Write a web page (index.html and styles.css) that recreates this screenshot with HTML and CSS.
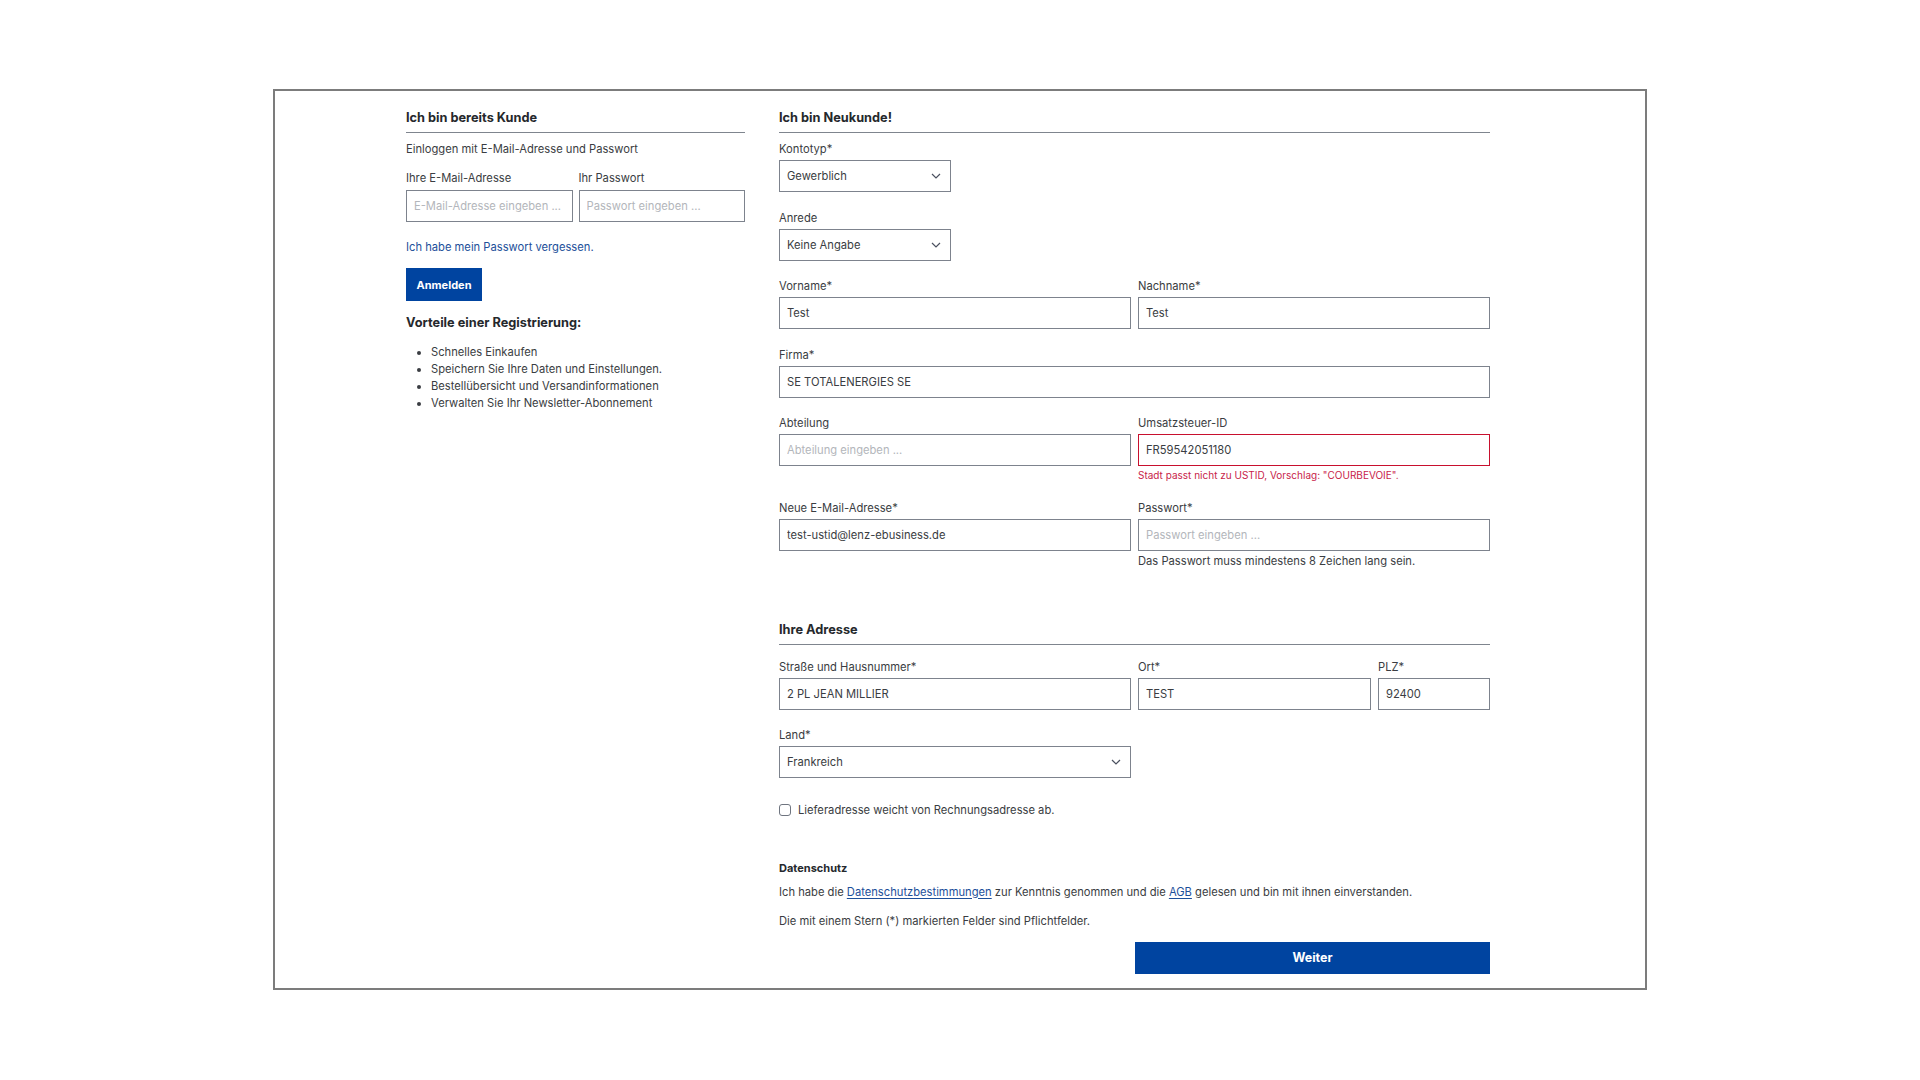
FILE: index.html
```html
<!DOCTYPE html>
<html lang="de">
<head>
<meta charset="utf-8">
<title>Anmelden / Registrieren</title>
<link rel="stylesheet" href="styles.css">
</head>
<body>
<div class="frame">
  <div class="cols">
    <section class="login">
      <h2 class="section-title">Ich bin bereits Kunde</h2>
      <p class="intro">Einloggen mit E-Mail-Adresse und Passwort</p>
      <div class="login-grid">
        <div class="field">
          <label class="label">Ihre E-Mail-Adresse</label>
          <input class="input" type="text" placeholder="E-Mail-Adresse eingeben ...">
        </div>
        <div class="field">
          <label class="label">Ihr Passwort</label>
          <input class="input" type="password" placeholder="Passwort eingeben ...">
        </div>
      </div>
      <a class="forgot" href="#">Ich habe mein Passwort vergessen.</a>
      <button class="btn btn-login" type="button">Anmelden</button>
      <h3 class="benefits-title">Vorteile einer Registrierung:</h3>
      <ul class="benefits">
        <li>Schnelles Einkaufen</li>
        <li>Speichern Sie Ihre Daten und Einstellungen.</li>
        <li>Bestellübersicht und Versandinformationen</li>
        <li>Verwalten Sie Ihr Newsletter-Abonnement</li>
      </ul>
    </section>

    <section class="register">
      <h2 class="section-title">Ich bin Neukunde!</h2>
      <div class="form-top">
        <div class="field narrow">
          <label class="label">Kontotyp*</label>
          <div class="select-wrap">
            <select class="input select"><option>Gewerblich</option></select>
            <svg class="chev" width="10" height="6" viewBox="0 0 10 6"><path d="M1 1l4 4 4-4" fill="none" stroke="#4b5160" stroke-width="1.2"/></svg>
          </div>
        </div>
        <div class="field narrow">
          <label class="label">Anrede</label>
          <div class="select-wrap">
            <select class="input select"><option>Keine Angabe</option></select>
            <svg class="chev" width="10" height="6" viewBox="0 0 10 6"><path d="M1 1l4 4 4-4" fill="none" stroke="#4b5160" stroke-width="1.2"/></svg>
          </div>
        </div>
        <div class="row2">
          <div class="field">
            <label class="label">Vorname*</label>
            <input class="input" type="text" value="Test">
          </div>
          <div class="field">
            <label class="label">Nachname*</label>
            <input class="input" type="text" value="Test">
          </div>
        </div>
        <div class="field">
          <label class="label">Firma*</label>
          <input class="input" type="text" value="SE TOTALENERGIES SE">
        </div>
        <div class="row2">
          <div class="field">
            <label class="label">Abteilung</label>
            <input class="input" type="text" placeholder="Abteilung eingeben ...">
          </div>
          <div class="field">
            <label class="label">Umsatzsteuer-ID</label>
            <input class="input invalid" type="text" value="FR59542051180">
            <p class="error">Stadt passt nicht zu USTID, Vorschlag: "COURBEVOIE".</p>
          </div>
        </div>
        <div class="row2 last">
          <div class="field">
            <label class="label">Neue E-Mail-Adresse*</label>
            <input class="input" type="text" value="test-ustid@lenz-ebusiness.de">
          </div>
          <div class="field">
            <label class="label">Passwort*</label>
            <input class="input" type="password" placeholder="Passwort eingeben ...">
            <p class="hint">Das Passwort muss mindestens 8 Zeichen lang sein.</p>
          </div>
        </div>
      </div>

      <h2 class="section-title address-title">Ihre Adresse</h2>
      <div class="address">
        <div class="row3">
          <div class="field">
            <label class="label">Straße und Hausnummer*</label>
            <input class="input" type="text" value="2 PL JEAN MILLIER">
          </div>
          <div class="field">
            <label class="label">Ort*</label>
            <input class="input" type="text" value="TEST">
          </div>
          <div class="field">
            <label class="label">PLZ*</label>
            <input class="input" type="text" value="92400">
          </div>
        </div>
        <div class="field half">
          <label class="label">Land*</label>
          <div class="select-wrap">
            <select class="input select"><option>Frankreich</option></select>
            <svg class="chev" width="10" height="6" viewBox="0 0 10 6"><path d="M1 1l4 4 4-4" fill="none" stroke="#4b5160" stroke-width="1.2"/></svg>
          </div>
        </div>
      </div>

      <label class="check">
        <input class="checkbox" type="checkbox">
        <span>Lieferadresse weicht von Rechnungsadresse ab.</span>
      </label>

      <h3 class="privacy-title">Datenschutz</h3>
      <p class="privacy-text">Ich habe die <a href="#">Datenschutzbestimmungen</a> zur Kenntnis genommen und die <a href="#">AGB</a> gelesen und bin mit ihnen einverstanden.</p>
      <p class="required-note">Die mit einem Stern (*) markierten Felder sind Pflichtfelder.</p>
      <div class="submit-row">
        <button class="btn btn-submit" type="button">Weiter</button>
      </div>
    </section>
  </div>
</div>
</body>
</html>
```

FILE: styles.css
```css
* { box-sizing: border-box; }

html, body {
  margin: 0;
  padding: 0;
  background: #ffffff;
}

body {
  font-family: Inter, "Noto Sans", "Liberation Sans", sans-serif;
  font-size: 11.2px;
  color: #3a3d42;
}

.frame {
  margin: 89px 0 0 273px;
  width: 1374px;
  height: 901px;
  border: 2px solid #7c7c7c;
  padding: 17px 0 0 131px;
}

.cols {
  display: grid;
  grid-template-columns: 339px 711px;
  column-gap: 34px;
  align-items: start;
}

.section-title {
  margin: 0;
  font-size: 12.75px;
  font-weight: 700;
  line-height: 18px;
  color: #25282c;
  padding-top: 1px;
  padding-bottom: 5px;
  border-bottom: 1px solid #7f858e;
}

/* ---------- Login ---------- */
.login {
  display: flex;
  flex-direction: column;
  align-items: flex-start;
}

.login > .section-title { align-self: stretch; }

.intro {
  margin: 9px 0 0;
  line-height: 14px;
}

.login-grid {
  align-self: stretch;
  margin-top: 15px;
  display: grid;
  grid-template-columns: 1fr 1fr;
  column-gap: 6px;
}

.field {
  display: flex;
  flex-direction: column;
  min-width: 0;
}

.label {
  line-height: 14px;
  margin-bottom: 4px;
  color: #3a3d42;
}

.login-grid .label { margin-bottom: 5px; }

.input {
  height: 32px;
  width: 100%;
  border: 1px solid #7d838d;
  border-radius: 0;
  background: #fff;
  padding: 0 7px;
  font-family: inherit;
  font-size: 11.2px;
  color: #3a3d42;
  outline: none;
}

.input::placeholder { color: #b3b6bb; }

.input.invalid { border-color: #c8102e; }

.forgot {
  margin-top: 18px;
  line-height: 14px;
  color: #1d4f9a;
  text-decoration: none;
}

.btn {
  border: 0;
  background: #0044a0;
  color: #fff;
  font-family: inherit;
  font-weight: 700;
  font-size: 11px;
  cursor: pointer;
}

.btn-login {
  margin-top: 14px;
  width: 76px;
  height: 33px;
  padding: 0;
}

.benefits-title {
  margin: 13px 0 0;
  font-size: 12.75px;
  font-weight: 700;
  line-height: 18px;
  color: #25282c;
}

.benefits {
  margin: 12px 0 0;
  padding-left: 25px;
  line-height: 17px;
}

/* ---------- Register ---------- */
.form-top {
  margin-top: 9px;
  display: flex;
  flex-direction: column;
  row-gap: 18.5px;
}

.narrow { width: 172px; }
.half { width: 352px; }

.row2 {
  display: grid;
  grid-template-columns: 1fr 1fr;
  column-gap: 7px;
  align-items: start;
}

.row3 {
  display: grid;
  grid-template-columns: 352px 233px 1fr;
  column-gap: 7px;
}

.select-wrap {
  position: relative;
}

.select {
  appearance: none;
  -webkit-appearance: none;
  padding-right: 24px;
}

.chev {
  position: absolute;
  right: 10px;
  top: 13px;
  pointer-events: none;
}

.error {
  margin: 3px 0 0;
  line-height: 13px;
  font-size: 10px;
  color: #c81d4a;
}

.hint {
  margin: 3px 0 0;
  line-height: 14px;
  color: #3a3d42;
}

.address-title {
  margin-top: 52px;
}

.address {
  margin-top: 15px;
  display: flex;
  flex-direction: column;
  row-gap: 18px;
}

.check {
  margin-top: 25px;
  display: flex;
  align-items: center;
  column-gap: 7px;
  line-height: 14px;
}

.checkbox {
  appearance: none;
  -webkit-appearance: none;
  margin: 1px 0 0;
  width: 12px;
  height: 12px;
  border: 1px solid #6f7580;
  border-radius: 3px;
  background: #fff;
}

.privacy-title {
  margin: 44px 0 0;
  font-size: 11px;
  font-weight: 700;
  line-height: 14px;
  color: #25282c;
}

.privacy-text {
  margin: 10px 0 0;
  line-height: 14px;
}

.privacy-text a {
  color: #1d4f9a;
  text-decoration: underline;
  text-underline-offset: 2px;
}

.required-note {
  margin: 15px 0 0;
  line-height: 14px;
}

.submit-row {
  margin-top: 14px;
  display: flex;
  justify-content: flex-end;
}

.btn-submit {
  width: 355px;
  height: 32px;
  font-size: 12.5px;
}
```
